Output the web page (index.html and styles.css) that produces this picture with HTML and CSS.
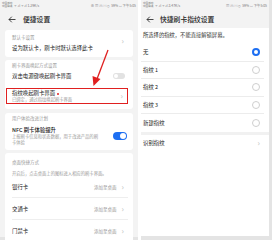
FILE: index.html
```html
<!DOCTYPE html>
<html lang="zh-CN">
<head>
    <meta charset="UTF-8">
    <meta name="viewport" content="width=device-width, initial-scale=1.0">
    <title>便捷设置</title>
    <link rel="stylesheet" href="styles.css">
</head>
<body>
    <div class="phone left">
        <div class="status">
            <span class="carrier">中国移动<br>中国联通</span>
            <span class="net">ᯤ.ıl ᯤ.ıl 1.29K/s</span>
            <span class="stat-right">⊕ ▦ ⓝ ⓘ ◷ 59% ▭ 下午5:05</span>
        </div>
        <div class="titlebar">
            <svg class="back" width="8" height="7" viewBox="0 0 8 7"><path d="M7.5 3.5H1M3.8 0.7L1 3.5l2.8 2.8" fill="none" stroke="#333" stroke-width="0.9"/></svg>
            <span class="title">便捷设置</span>
        </div>

        <div class="card card-default">
            <div class="item">
                <div class="item-text">
                    <div class="label">默认卡设置</div>
                    <div class="main">设为默认卡，刷卡时默认选择此卡</div>
                </div>
                <span class="chev">›</span>
            </div>
        </div>

        <div class="card card-wake">
            <div class="label">刷卡界面唤起方式设置</div>
            <div class="row-toggle">
                <span class="main">双击电源键唤起刷卡界面</span>
                <span class="toggle"></span>
            </div>
            <div class="marked">
                <div class="item-text">
                    <div class="main">指纹唤起刷卡界面 <span class="dot"></span></div>
                    <div class="sub">已绑定，通过指纹唤起刷卡界面</div>
                </div>
                <span class="chev">›</span>
            </div>
        </div>

        <div class="card card-nfc">
            <div class="label">用户体验改进计划</div>
            <div class="nfc">
                <div class="nfc-text">
                    <div class="main strong">NFC 刷卡体验提升</div>
                    <div class="sub wrap">上报刷卡信息和状态数据，用于改进产品的刷卡体验</div>
                </div>
                <span class="toggle on"></span>
            </div>
        </div>

        <div class="card card-desk">
            <div class="label">桌面快捷方式</div>
            <div class="desc">开启后，点击桌面上的图标进入相应的刷卡界面。</div>
            <div class="desk-row"><span class="main">银行卡</span><span class="add">添加至桌面</span><span class="chev">›</span></div>
            <div class="desk-row"><span class="main">交通卡</span><span class="add">添加至桌面</span><span class="chev">›</span></div>
            <div class="desk-row"><span class="main">门禁卡</span><span class="add">添加至桌面</span><span class="chev">›</span></div>
        </div>

        <svg class="arrow" width="30" height="42" viewBox="0 0 30 42">
            <path d="M20 1L9 30" stroke="#e02020" stroke-width="1.3" fill="none"/>
            <path d="M5.5 37L4.5 27L12.5 30Z" fill="#e02020"/>
        </svg>
    </div>

    <div class="phone right">
        <div class="status">
            <span class="carrier">中国移动<br>中国联通</span>
            <span class="net">ᯤ.ıl ᯤ.ıl 3.47K/s</span>
            <span class="stat-right">▦ ⓝ ⓘ ◷ 59% ▭ 下午5:05</span>
        </div>
        <div class="titlebar">
            <svg class="back" width="8" height="7" viewBox="0 0 8 7"><path d="M7.5 3.5H1M3.8 0.7L1 3.5l2.8 2.8" fill="none" stroke="#333" stroke-width="0.9"/></svg>
            <span class="title">快捷刷卡指纹设置</span>
        </div>
        <div class="content">
            <div class="hint">所选择的指纹，不能直接解锁屏幕。</div>
            <div class="opt"><span class="main">无</span><span class="radio checked"></span></div>
            <div class="opt"><span class="main">指纹 1</span><span class="radio"></span></div>
            <div class="opt"><span class="main">指纹 2</span><span class="radio"></span></div>
            <div class="opt"><span class="main">指纹 3</span><span class="radio"></span></div>
            <div class="opt last"><span class="main">新建指纹</span><span class="radio"></span></div>
            <div class="sep"></div>
            <div class="opt last"><span class="main">识别指纹</span><span class="chev">›</span></div>
        </div>
    </div>
</body>
</html>
```

FILE: styles.css
```css
body {
    margin: 0;
    width: 272px;
    height: 240px;
    overflow: hidden;
    display: flex;
    gap: 3px;
    background-color: #ffffff;
    font-family: "Noto Sans CJK SC", "Noto Sans", sans-serif;
    color: #222;
}
.phone {
    position: relative;
    height: 240px;
    box-sizing: border-box;
}
.left {
    width: 138px;
    background-color: #f3f3f3;
    border-bottom: 3px solid #e4e4e4;
}
.right {
    width: 131px;
    background-color: #ffffff;
    border-right: 3px solid #e4e4e4;
    border-bottom: 4px solid #e4e4e4;
}
.right .status,
.right .titlebar {
    background-color: #f3f3f3;
}
.status {
    height: 10px;
    display: flex;
    align-items: center;
    padding: 0 2px;
    font-size: 3.4px;
    color: #777;
    white-space: nowrap;
}
.carrier {
    font-size: 2.6px;
    line-height: 3px;
    margin-right: 2px;
}
.net {
    margin-right: auto;
}
.titlebar {
    height: 18px;
    display: flex;
    align-items: center;
    padding-left: 8px;
}
.right .titlebar {
    padding-left: 5px;
}
.back {
    margin-right: 7px;
}
.right .back {
    margin-right: 6px;
}
.title {
    font-size: 6.8px;
    font-weight: 500;
    color: #222;
}
.card {
    background-color: #ffffff;
    margin: 0 5px;
    border-radius: 3px;
    padding: 0 5px 0 7px;
}
.label {
    font-size: 4.5px;
    line-height: 8px;
    color: #999;
}
.main {
    font-size: 5.4px;
    color: #222;
}
.strong {
    font-weight: 500;
}
.sub {
    font-size: 4.3px;
    color: #999;
}
.chev {
    font-size: 8px;
    color: #bbb;
    line-height: 8px;
}
.card-default {
    margin-top: 2px;
    height: 27px;
}
.item {
    display: flex;
    align-items: center;
    justify-content: space-between;
    padding-right: 4px;
}
.card-default .label {
    margin-top: 3px;
}
.card-default .main {
    margin-top: 3px;
    line-height: 8px;
}
.card-default .chev {
    margin-top: -1px;
}
.card-wake {
    margin-top: 3px;
    height: 49px;
    box-sizing: border-box;
    padding-top: 1px;
}
.row-toggle {
    height: 14px;
    display: flex;
    align-items: center;
    justify-content: space-between;
    padding-right: 3px;
}
.toggle {
    width: 12px;
    height: 6px;
    border-radius: 3px;
    background-color: #e2e2e2;
    position: relative;
}
.toggle:after {
    content: "";
    position: absolute;
    left: 1px;
    top: 1px;
    width: 4px;
    height: 4px;
    border-radius: 50%;
    background-color: #ffffff;
}
.toggle.on {
    width: 14px;
    height: 8px;
    border-radius: 4px;
    background-color: #1d6ff2;
}
.toggle.on:after {
    left: auto;
    right: 1px;
    width: 6px;
    height: 6px;
}
.marked {
    margin: 5px 0 0 -6px;
    border: 1px solid #e02020;
    padding: 0 4px 0 5px;
    height: 14px;
    display: flex;
    align-items: center;
    justify-content: space-between;
}
.marked .main {
    line-height: 7px;
}
.marked .sub {
    line-height: 5px;
}
.dot {
    display: inline-block;
    width: 2px;
    height: 2px;
    border-radius: 50%;
    background-color: #e02020;
    vertical-align: middle;
    margin-left: 1px;
}
.card-nfc {
    margin-top: 4px;
    height: 37px;
    box-sizing: border-box;
    padding-top: 1px;
}
.nfc {
    display: flex;
    align-items: center;
    justify-content: space-between;
    padding-right: 1px;
    margin-top: 4px;
}
.nfc-text {
    width: 90px;
}
.nfc .main {
    line-height: 8px;
}
.nfc .wrap {
    line-height: 5.5px;
}
.card-desk {
    margin-top: 3px;
    padding-top: 5px;
    border-radius: 3px 3px 0 0;
}
.desc {
    font-size: 4.3px;
    color: #999;
    line-height: 6px;
    margin-top: 4px;
}
.desk-row {
    height: 21px;
    display: flex;
    align-items: center;
    padding-right: 4px;
}
.desk-row + .desk-row {
    border-top: 1px solid #eeeeee;
}
.desk-row .main {
    margin-right: auto;
}
.add {
    font-size: 4.5px;
    color: #999;
    margin-right: 5px;
}
.arrow {
    position: absolute;
    left: 88px;
    top: 49px;
}
.content {
    padding-top: 2px;
}
.hint {
    font-size: 5.3px;
    line-height: 10px;
    color: #333;
    padding-left: 2px;
    margin-bottom: 4px;
}
.opt {
    height: 16.5px;
    border-bottom: 1px solid #ececec;
    margin-right: 5px;
    padding: 0 4px 0 2px;
    display: flex;
    align-items: center;
    justify-content: space-between;
}
.opt.last {
    border-bottom: none;
    height: 17.5px;
}
.radio {
    width: 6px;
    height: 6px;
    border: 1px solid #cfcfcf;
    border-radius: 50%;
}
.radio.checked {
    width: 4px;
    height: 4px;
    border: 2px solid #1d6ff2;
}
.sep {
    height: 3px;
    background-color: #f1f1f1;
}
```
